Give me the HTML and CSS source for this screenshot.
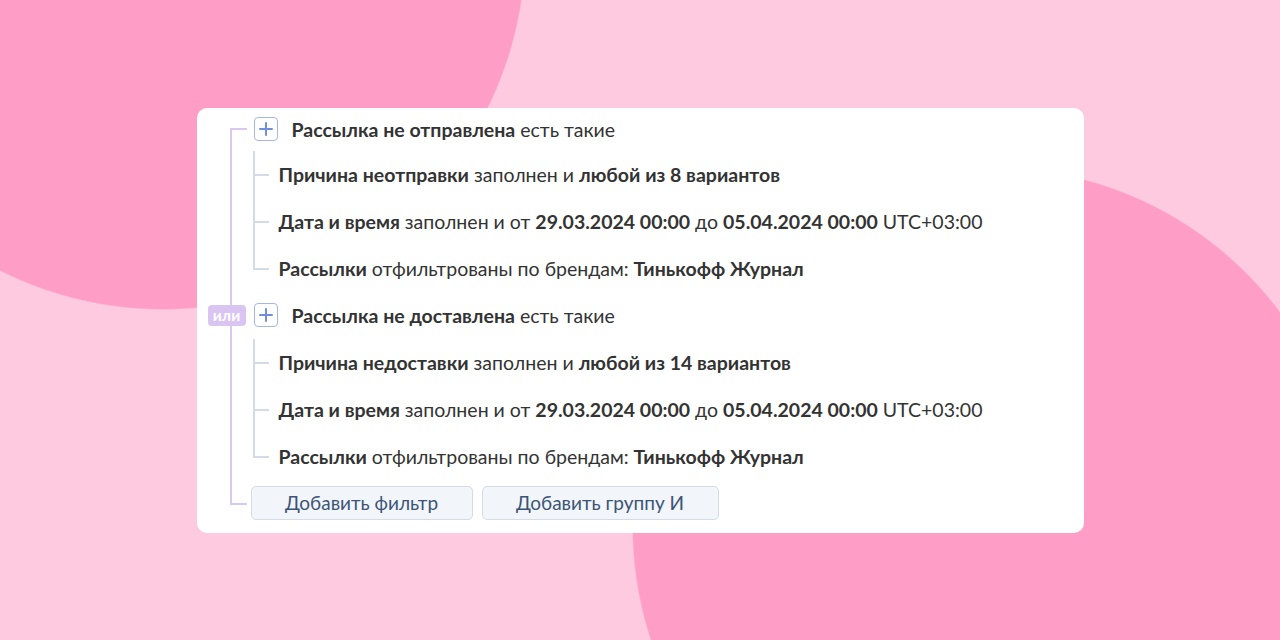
FILE: index.html
```html
<!DOCTYPE html>
<html lang="ru">
<head>
<meta charset="utf-8">
<title>Фильтры</title>
<link rel="stylesheet" href="styles.css">
</head>
<body>
<main class="stage">
  <section class="card">
    <div class="or-group">
      <div class="group">
        <div class="head">
          <span class="plus"><svg width="14" height="14" viewBox="0 0 14 14"><path d="M7 1v12M1 7h12" stroke="#6f8fdc" stroke-width="2" stroke-linecap="round"/></svg></span>
          <span class="text"><b>Рассылка не отправлена</b> есть такие</span>
        </div>
        <div class="children">
          <div class="leaf"><span class="text"><b>Причина неотправки</b> заполнен и <b>любой из 8 вариантов</b></span></div>
          <div class="leaf"><span class="text"><b>Дата и время</b> заполнен и от <b>29.03.2024 00:00</b> до <b>05.04.2024 00:00</b> UTC+03:00</span></div>
          <div class="leaf"><span class="text"><b>Рассылки</b> отфильтрованы по брендам: <b>Тинькофф Журнал</b></span></div>
        </div>
      </div>
      <div class="group">
        <div class="head">
          <span class="or-badge">или</span>
          <span class="plus"><svg width="14" height="14" viewBox="0 0 14 14"><path d="M7 1v12M1 7h12" stroke="#6f8fdc" stroke-width="2" stroke-linecap="round"/></svg></span>
          <span class="text"><b>Рассылка не доставлена</b> есть такие</span>
        </div>
        <div class="children">
          <div class="leaf"><span class="text"><b>Причина недоставки</b> заполнен и <b>любой из 14 вариантов</b></span></div>
          <div class="leaf"><span class="text"><b>Дата и время</b> заполнен и от <b>29.03.2024 00:00</b> до <b>05.04.2024 00:00</b> UTC+03:00</span></div>
          <div class="leaf"><span class="text"><b>Рассылки</b> отфильтрованы по брендам: <b>Тинькофф Журнал</b></span></div>
        </div>
      </div>
      <div class="actions">
        <button class="btn btn-filter">Добавить фильтр</button>
        <button class="btn btn-group">Добавить группу И</button>
      </div>
    </div>
  </section>
</main>
</body>
</html>
```
FILE: styles.css
```css
html, body {
  margin: 0;
  padding: 0;
}
body {
  width: 1280px;
  height: 640px;
  overflow: hidden;
  background:
    radial-gradient(circle 363px at 163px -53px, #fe9ec6 99.6%, rgba(254, 158, 198, 0) 100%),
    radial-gradient(circle 360px at 992px 527px, #fe9ec6 99.6%, rgba(254, 158, 198, 0) 100%),
    #fecae0;
  font-family: "Lato", "Noto Sans", sans-serif;
  color: #333333;
}
.stage {
  height: 640px;
  display: flex;
  align-items: center;
  justify-content: center;
}
.card {
  width: 887px;
  height: 425px;
  box-sizing: border-box;
  background: #ffffff;
  border-radius: 10px;
  padding: 0 0 14px 0;
}
.or-group {
  position: relative;
  margin-left: 33px;
}
.or-group::before {
  content: "";
  position: absolute;
  left: 0;
  top: 20px;
  bottom: 15px;
  width: 15px;
  border: 2px solid #dac8f3;
  border-right: none;
}
.group {
  position: relative;
}
.head {
  position: relative;
  height: 43px;
  display: flex;
  align-items: center;
  padding-left: 24px;
  font-size: 19.5px;
  white-space: nowrap;
}
.group + .group .head {
  height: 47px;
}
.plus {
  width: 24px;
  height: 24px;
  box-sizing: border-box;
  border: 1.5px solid #a4b8e8;
  border-radius: 4px;
  display: flex;
  align-items: center;
  justify-content: center;
  margin-right: 14px;
}
.or-badge {
  position: absolute;
  left: -22px;
  top: 13px;
  height: 21px;
  width: 38px;
  background: #dac5f2;
  color: #ffffff;
  border-radius: 4px;
  font-size: 15.5px;
  font-weight: 700;
  display: flex;
  align-items: center;
  justify-content: center;
}
.children {
  margin-left: 23px;
}
.leaf {
  position: relative;
  height: 47px;
  display: flex;
  align-items: center;
  padding-left: 26px;
  font-size: 19.5px;
  white-space: nowrap;
}
.leaf::before {
  content: "";
  position: absolute;
  left: 0;
  top: 0;
  bottom: 0;
  width: 2px;
  background: #d2dbe7;
}
.leaf:last-child::before {
  bottom: 23px;
}
.leaf::after {
  content: "";
  position: absolute;
  left: 0;
  top: 23px;
  width: 16px;
  height: 2px;
  background: #d2dbe7;
}
.text b {
  font-weight: 700;
}
.actions {
  display: flex;
  gap: 9px;
  padding-left: 21px;
  margin-top: 6px;
}
.btn {
  height: 34px;
  box-sizing: border-box;
  border: 1px solid #d3dbe5;
  background: #f2f5f9;
  border-radius: 5px;
  color: #3b5478;
  font-family: inherit;
  font-size: 19px;
  padding: 0;
}
.btn-filter {
  width: 222px;
}
.btn-group {
  width: 237px;
}
```
